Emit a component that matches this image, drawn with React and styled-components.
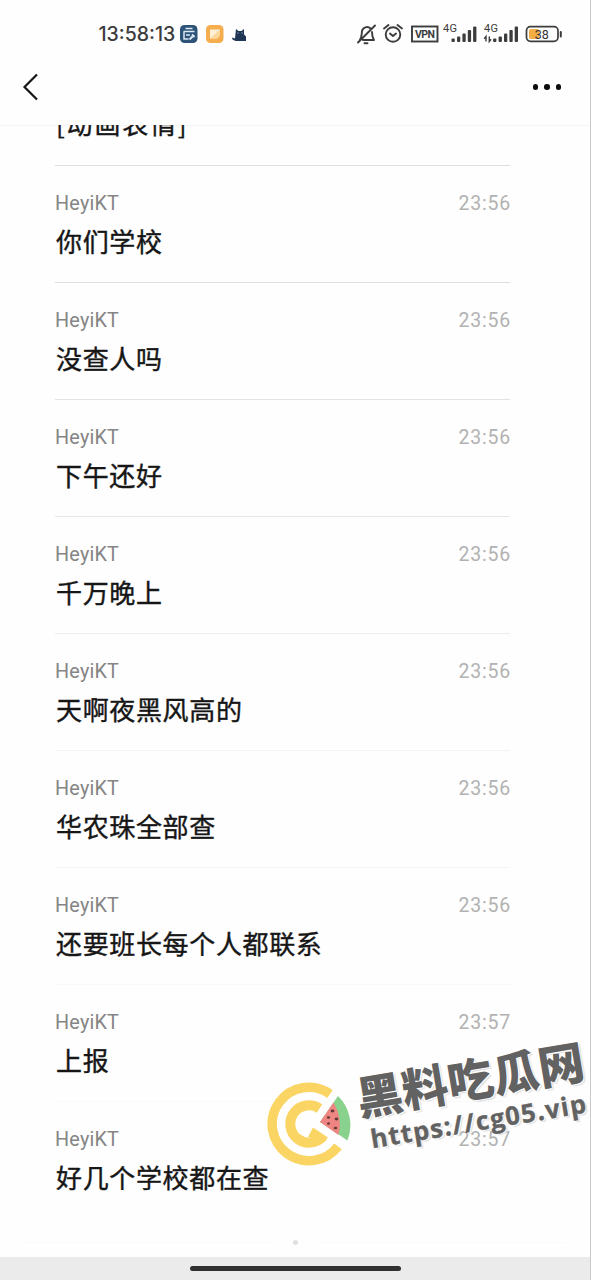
import styled, { createGlobalStyle } from 'styled-components'

const messages = [
    { text: '你们学校', time: '23:56', line: '#dedede' },
    { text: '没查人吗', time: '23:56', line: '#e2e2e2' },
    { text: '下午还好', time: '23:56', line: '#e6e6e6' },
    { text: '千万晚上', time: '23:56', line: '#ededed' },
    { text: '天啊夜黑风高的', time: '23:56', line: '#f2f2f2' },
    { text: '华农珠全部查', time: '23:56', line: '#f5f5f5' },
    { text: '还要班长每个人都联系', time: '23:56', line: '#f8f8f8' },
    { text: '上报', time: '23:57', line: '#fafafa' },
    { text: '好几个学校都在查', time: '23:57', line: 'transparent' },
]

function StatusBar() {
    return (
        <Status>
            <Clock>13:58:13</Clock>
            <svg width="72" height="20" viewBox="0 0 72 20">
                <rect x="1" y="1" width="17.500" height="18" rx="4.500" fill="#2d5379" />
                <path d="M6.500 4.500h7M4.500 7.500h11M5 7.500v7.500h4.500M7 11h4" fill="none" stroke="#dce8f2" strokeWidth="1.500" />
                <path d="M10.500 15.500l3-3M13 10.500l2.500 2.500" fill="none" stroke="#dce8f2" strokeWidth="2" />
                <rect x="27" y="1" width="17.500" height="18" rx="4.500" fill="#f6ad4d" />
                <path d="M31 5.500h10v6l-3 3h-7z" fill="#fff0d6" />
                <path d="M31 14.500l10-9v6l-3 3z" fill="#fbd79c" />
                <path d="M57 5l2.500 2h3L65 5v5.500l2 2V17H56.500l-3-1.500-.5-2 3 1z" fill="#1f3655" />
                <path d="M58.500 9h1M62.500 9h1" stroke="#b9c8dc" />
            </svg>
            <Spacer />
            <svg width="206" height="26" viewBox="356 21 206 26" fill="none" stroke="#3c3c3c">
                <g strokeWidth="1.900" strokeLinecap="round" strokeLinejoin="round">
                    <path d="M360 39.500c2-2.500 1.500-5 2-8.500.6-3.500 5.500-5.500 8.500-2.500M363 40h11c-2-3-2-5-2-8M364.500 43.200h3M375 25.500l-17 17" />
                    <circle cx="393" cy="34.500" r="7.300" />
                    <path d="M384 28.500l4.500-3.500M402 28.500l-4.500-3.500M390 33.500l3 2.500 3-2.500" />
                </g>
                <rect x="412" y="26.500" width="25.500" height="15" strokeWidth="1.900" />
                <g fill="#3c3c3c" stroke="none" fontFamily="Roboto, sans-serif">
                    <text x="415" y="37.800" fontSize="10.500" fontWeight="700" textLength="20">VPN</text>
                    <text x="443" y="31.800" fontSize="11" textLength="14">4G</text>
                    <text x="484" y="31.800" fontSize="11" textLength="14">4G</text>
                    <rect x="451.500" y="38.500" width="3.300" height="3.500" rx="1" />
                    <rect x="457" y="36.500" width="3.300" height="5.500" rx="1" />
                    <rect x="462.400" y="33.500" width="3.300" height="8.500" rx="1" />
                    <rect x="467.800" y="30" width="3.300" height="12" rx="1" />
                    <rect x="473.100" y="26.500" width="3.300" height="15.500" rx="1" />
                    <rect x="493.100" y="38.500" width="3.300" height="3.500" rx="1" />
                    <rect x="498.600" y="36.500" width="3.300" height="5.500" rx="1" />
                    <rect x="504" y="33.500" width="3.300" height="8.500" rx="1" />
                    <rect x="509.400" y="30" width="3.300" height="12" rx="1" />
                    <rect x="514.700" y="26.500" width="3.300" height="15.500" rx="1" />
                </g>
                <path d="M486 41.500v-5l-1.800 2.200M489.300 36.500v5l1.800-2.200" strokeWidth="1.400" />
                <rect x="526.500" y="26.700" width="31.500" height="14.600" rx="4" strokeWidth="1.700" />
                <rect x="529" y="29" width="10" height="10" rx="2" fill="#f3ad43" stroke="none" />
                <path d="M560.800 32v4.500" strokeWidth="2" strokeLinecap="round" />
                <text x="534.800" y="38.500" fontFamily="Roboto, sans-serif" fontSize="12.500" fill="#333" stroke="none">38</text>
            </svg>
        </Status>
    )
}

function Watermark() {
    return (
        <Mark>
            <svg width="84" height="84" viewBox="-42 -42 84 84">
                <g fill="none" stroke="#fad564">
                    <path d="M21-30A36.700 36.700 0 1 0 29 22.300" strokeWidth="9.500" />
                    <path d="M10.500-15.500A18.700 18.700 0 1 0 14 12.400" strokeWidth="10" />
                </g>
                <path d="M4 3.500L19 13.500L13 19L-1 13z" fill="#fad564" />
                <path d="M11-2L29-28A41 41 0 0 1 38.500 16.500z" fill="#89d28d" />
                <path d="M11-2L24.500-21.500Q34-6 29.500 11z" fill="#ef8582" />
                <g fill="#643a37">
                    <ellipse cx="23.500" cy="-13" rx="1.900" ry="1.400" />
                    <ellipse cx="19.500" cy="-6.500" rx="1.600" ry="1.200" />
                    <ellipse cx="27.500" cy="-5" rx="1.900" ry="1.400" />
                    <ellipse cx="19.500" cy="-.5" rx="1.500" ry="1.200" />
                    <ellipse cx="26.500" cy="4" rx="1.800" ry="1.300" />
                </g>
            </svg>
            <MarkText>
                <MarkName>黑料吃瓜网</MarkName>
                <MarkUrl>https://cg05.vip</MarkUrl>
            </MarkText>
        </Mark>
    )
}

function App() {
    return (
        <>
            <GlobalStyle />
            <Screen>
                <StatusBar />
                <NavBar>
                    <svg width="18" height="28" viewBox="0 0 18 28" fill="none" stroke="#161616" strokeWidth="2.200">
                        <path d="M16 1.500L3.500 14L16 26.500" />
                    </svg>
                    <Dots><i /><i /><i /></Dots>
                </NavBar>
                <Scroll>
                    <List>
                        <Sticker>[动画表情]</Sticker>
                        {messages.map((item) => (
                            <Message key={item.text} $line={item.line}>
                                <Meta>
                                    <Name>HeyiKT</Name>
                                    <Time>{item.time}</Time>
                                </Meta>
                                <Text>{item.text}</Text>
                            </Message>
                        ))}
                    </List>
                    <End><Rule /><EndDot /><Rule /></End>
                </Scroll>
                <HomeArea><HomeBar /></HomeArea>
                <Watermark />
            </Screen>
        </>
    )
}

export default App


const GlobalStyle = createGlobalStyle`
    * {
        box-sizing: border-box;
    }
    body {
        margin: 0;
        background: #fefefe;
        font-family: Roboto, "Noto Sans CJK SC", sans-serif;
    }
    svg {
        display: block;
        flex-shrink: 0;
    }
`

const Screen = styled.div`
    position: relative;
    display: flex;
    flex-direction: column;
    width: 591px;
    height: 1280px;
    overflow: hidden;
    background: #fefefe;
    border-right: 1px solid #c9c9c9;
`

const Status = styled.div`
    display: flex;
    align-items: center;
    height: 51px;
    padding: 17px 28px 0 98.500px;
`

const Clock = styled.div`
    width: 80.500px;
    color: #3c3c3c;
    font-family: Inter, sans-serif;
    font-size: 19.500px;
    font-weight: 500;
    white-space: nowrap;
`

const Spacer = styled.div`
    flex: 1;
`

const NavBar = styled.div`
    display: flex;
    align-items: center;
    justify-content: space-between;
    height: 74px;
    padding: 0 29px 2px 21px;
`

const Dots = styled.div`
    display: flex;
    gap: 6px;

    i {
        width: 5.500px;
        height: 5.500px;
        border-radius: 50%;
        background: #0c0c0c;
    }
`

const Scroll = styled.div`
    flex: 1;
    min-height: 0;
    overflow: hidden;
    box-shadow: inset 0 1px #f5f5f5;
`

const List = styled.div`
    padding: 0 80px 0 55px;
`

const Text = styled.div`
    margin-top: 6px;
    padding-left: 1px;
    color: #161616;
    font-family: "Noto Sans CJK SC", sans-serif;
    font-size: 26px;
    font-weight: 400;
    line-height: 38px;
    letter-spacing: 0.650px;
    white-space: nowrap;
    -webkit-text-stroke: 0.400px #161616;
`

/* scrolled half way under the nav bar */
const Sticker = styled(Text)`
    height: 62px;
    margin-top: -21px;
    letter-spacing: 1.800px;
    border-bottom: 1px solid #dedede;
`

const Message = styled.div`
    height: 117px;
    padding-top: 25px;
    border-bottom: 1px solid ${(props) => props.$line};
`

const Meta = styled.div`
    display: flex;
    justify-content: space-between;
    height: 25px;
    line-height: 26px;
    margin-right: -1px;
`

const Name = styled.span`
    color: #858585;
    font-size: 19.800px;
    letter-spacing: 0.200px;
`

const Time = styled.span`
    color: #b2b2b2;
    font-size: 19.500px;
    letter-spacing: 0.800px;
`

const End = styled.div`
    display: flex;
    align-items: center;
    gap: 20px;
    height: 6px;
    margin-top: 20px;
    padding: 0 24px;
`

const Rule = styled.div`
    flex: 1;
    height: 1px;
    background: #fafafa;
`

const EndDot = styled.div`
    width: 5px;
    height: 5px;
    border-radius: 50%;
    background: #e0e0e0;
`

const HomeArea = styled.div`
    display: flex;
    justify-content: center;
    height: 23px;
    padding-top: 9px;
    background: #ebebeb;
`

const HomeBar = styled.div`
    width: 211px;
    height: 5px;
    border-radius: 3px;
    background: #303030;
`

/* floats over the message list */
const Mark = styled.div`
    position: absolute;
    left: 267px;
    top: 1082px;
    display: flex;
    color: #626262;
`

const MarkText = styled.div`
    margin: -9px 0 0 8px;
    transform: rotate(-9.500deg);
    transform-origin: 0 39px;
    white-space: nowrap;
    text-shadow: 1px 1px 0 #fff, -1px -1px 0 #fff, 2px 2px 1px #ddd;
`

const MarkName = styled.div`
    font-family: "Noto Sans CJK SC", sans-serif;
    font-size: 46px;
    font-weight: 900;
    line-height: 46px;
`

const MarkUrl = styled.div`
    margin-top: 6px;
    padding-left: 7px;
    font-family: "Open Sans", sans-serif;
    font-size: 25.500px;
    font-weight: 700;
    line-height: 30px;
    letter-spacing: 1.300px;
    -webkit-text-stroke: 0.400px #626262;
`
